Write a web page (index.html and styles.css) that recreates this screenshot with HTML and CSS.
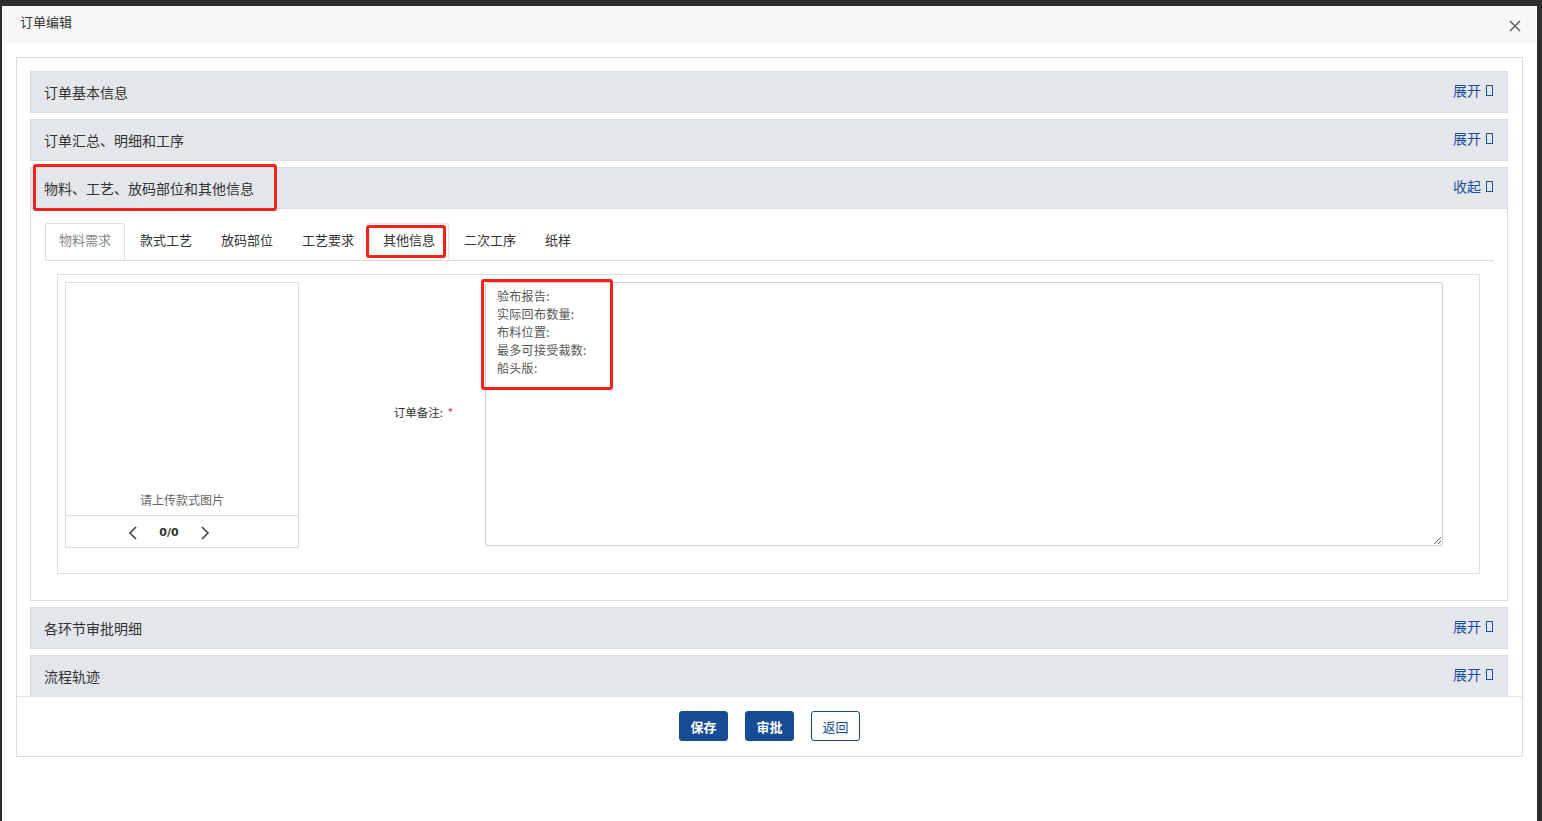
FILE: index.html
```html
<!DOCTYPE html>
<html lang="zh-CN">
<head>
    <meta charset="UTF-8">
    <meta name="viewport" content="width=device-width, initial-scale=1.0">
    <title>订单编辑</title>
    <link rel="stylesheet" href="styles.css">
</head>
<body>
    <div class="dialog">
        <div class="dialog-head">
            <span class="dialog-title">订单编辑</span>
            <span class="dialog-close">
                <svg width="12" height="12" viewBox="0 0 12 12"><path d="M1 1L11 11M11 1L1 11" stroke="#555" stroke-width="1.4" fill="none"/></svg>
            </span>
        </div>

        <div class="dialog-body">
            <div class="panel">
                <div class="panel-scroll">
                    <div class="section">
                        <div class="section-head">
                            <span class="section-title">订单基本信息</span>
                            <span class="toggle">展开 <i class="tofu"></i></span>
                        </div>
                    </div>
                    <div class="section">
                        <div class="section-head">
                            <span class="section-title">订单汇总、明细和工序</span>
                            <span class="toggle">展开 <i class="tofu"></i></span>
                        </div>
                    </div>
                    <div class="section">
                        <div class="section-head">
                            <span class="section-title">物料、工艺、放码部位和其他信息</span>
                            <span class="toggle">收起 <i class="tofu"></i></span>
                            <div class="mark mark-head"></div>
                        </div>
                        <div class="section-body">
                            <ul class="tabs">
                                <li class="tab active">物料需求</li>
                                <li class="tab">款式工艺</li>
                                <li class="tab">放码部位</li>
                                <li class="tab">工艺要求</li>
                                <li class="tab hover">其他信息<div class="mark mark-tab"></div></li>
                                <li class="tab">二次工序</li>
                                <li class="tab">纸样</li>
                            </ul>
                            <div class="tab-pane">
                                <div class="pane-box">
                                    <div class="pic-box">
                                        <div class="pic-view">请上传款式图片</div>
                                        <div class="pic-nav">
                                            <svg width="12" height="16" viewBox="0 0 12 16"><path d="M9 2L3 8L9 14" stroke="#444" stroke-width="1.6" fill="none"/></svg>
                                            <span class="pic-count">0/0</span>
                                            <svg width="12" height="16" viewBox="0 0 12 16"><path d="M3 2L9 8L3 14" stroke="#444" stroke-width="1.6" fill="none"/></svg>
                                        </div>
                                    </div>
                                    <label class="remark-label" for="remark">订单备注: <em>*</em></label>
                                    <div class="remark-wrap">
                                        <textarea id="remark" class="remark">验布报告:
实际回布数量:
布料位置:
最多可接受裁数:
船头版:</textarea>
                                        <div class="mark mark-text"></div>
                                    </div>
                                </div>
                            </div>
                        </div>
                    </div>
                    <div class="section">
                        <div class="section-head">
                            <span class="section-title">各环节审批明细</span>
                            <span class="toggle">展开 <i class="tofu"></i></span>
                        </div>
                    </div>
                    <div class="section">
                        <div class="section-head">
                            <span class="section-title">流程轨迹</span>
                            <span class="toggle">展开 <i class="tofu"></i></span>
                        </div>
                    </div>
                </div>
                <div class="panel-foot">
                    <button type="button" class="btn btn-primary">保存</button>
                    <button type="button" class="btn btn-primary">审批</button>
                    <button type="button" class="btn btn-outline">返回</button>
                </div>
            </div>
        </div>
    </div>
</body>
</html>
```

FILE: styles.css
```css
body {
    margin: 0;
    padding: 6px 5px 0 2px;
    background-color: #2d2d2d;
    font-family: "Noto Sans CJK SC", "Liberation Sans", sans-serif;
    color: #333;
    height: 821px;
    box-sizing: border-box;
    overflow: hidden;
}
.dialog {
    background: #fff;
    height: 815px;
}
.dialog-head {
    height: 37px;
    background: #f7f7f7;
    display: flex;
    align-items: center;
    justify-content: space-between;
    padding: 0 16px 0 18px;
}
.dialog-title {
    font-size: 13px;
    color: #333;
    margin-top: -6px;
}
.dialog-close {
    display: flex;
    margin-top: 3px;
}
.dialog-body {
    padding: 14px 14px 0 14px;
}
.panel {
    border: 1px solid #ddd;
    height: 698px;
    display: flex;
    flex-direction: column;
}
.panel-scroll {
    flex: 1;
    overflow: hidden;
    padding: 13px 14px 0 13px;
}
.section {
    margin-bottom: 6px;
}
.section-head {
    position: relative;
    height: 40px;
    background: #e3e6ea;
    border: 1px solid #d9dce1;
    display: flex;
    align-items: center;
    justify-content: space-between;
    padding: 0 14px 0 13px;
}
.section-title {
    font-size: 14px;
    color: #333;
    margin-top: -1px;
}
.toggle {
    font-size: 14px;
    color: #1c4f9b;
    display: flex;
    align-items: center;
    gap: 5px;
    margin-top: -4px;
}
.tofu {
    display: inline-block;
    width: 5px;
    height: 9px;
    border: 1.5px solid #1c4f9b;
}
.mark {
    position: absolute;
    border: 3px solid #f3231c;
    border-radius: 3px;
    pointer-events: none;
}
.mark-head {
    left: 2px;
    top: -4px;
    width: 238px;
    height: 41px;
}
.section-body {
    border: 1px solid #ddd;
    border-top: none;
    padding: 14px 13px 26px 14px;
}
.tabs {
    list-style: none;
    margin: 0;
    padding: 0;
    display: flex;
    border-bottom: 1px solid #ddd;
    height: 37px;
}
.tab {
    position: relative;
    padding: 0 13px;
    margin-right: 1px;
    font-size: 13px;
    line-height: 32px;
    color: #333;
    border: 1px solid transparent;
    border-bottom: none;
}
.tab.active {
    color: #888;
    background: #fff;
    border-color: #ddd;
    height: 37px;
    box-sizing: border-box;
    border-radius: 2px 2px 0 0;
}
.tab.hover {
    border-color: #e6e6e6;
}
.mark-tab {
    left: -4px;
    top: 1px;
    width: 74px;
    height: 27px;
}
.tab-pane {
    padding: 13px 14px 0 12px;
}
.pane-box {
    border: 1px solid #ddd;
    padding: 7px 36px 25px 7px;
    display: flex;
    align-items: stretch;
}
.pic-box {
    width: 232px;
    height: 264px;
    border: 1px solid #ddd;
    display: flex;
    flex-direction: column;
}
.pic-view {
    flex: 1;
    display: flex;
    align-items: flex-end;
    justify-content: center;
    font-size: 12px;
    color: #666;
    padding-bottom: 7px;
}
.pic-nav {
    height: 29px;
    border-top: 1px solid #ddd;
    display: flex;
    align-items: center;
    justify-content: center;
    gap: 20px;
    padding-right: 26px;
    padding-top: 2px;
}
.pic-count {
    font-family: "DejaVu Sans", sans-serif;
    font-size: 11px;
    font-weight: bold;
    color: #333;
}
.remark-label {
    width: 186px;
    box-sizing: border-box;
    padding-right: 32px;
    text-align: right;
    font-size: 11.5px;
    color: #333;
    align-self: center;
    margin-bottom: 6px;
}
.remark-label em {
    font-style: normal;
    color: #e33;
    margin-left: 2px;
}
.remark-wrap {
    position: relative;
    flex: 1;
    display: flex;
}
.remark {
    flex: 1;
    height: 264px;
    box-sizing: border-box;
    border: 1px solid #ccc;
    border-radius: 3px;
    padding: 4px 11px;
    font-family: "Noto Sans CJK SC", sans-serif;
    font-size: 12px;
    letter-spacing: 0.3px;
    line-height: 18px;
    color: #555;
    margin: 0;
}
.mark-text {
    left: -4px;
    top: -3px;
    width: 126px;
    height: 105px;
}
.panel-foot {
    height: 59px;
    border-top: 1px solid #e6e6e6;
    display: flex;
    align-items: center;
    justify-content: center;
    gap: 17px;
}
.btn {
    width: 49px;
    height: 30px;
    border-radius: 3px;
    font-family: "Noto Sans CJK SC", sans-serif;
    font-size: 13px;
    padding: 0;
    margin-top: -1px;
}
.btn-primary {
    background: #164c96;
    border: 1px solid #164c96;
    color: #fff;
    font-weight: bold;
}
.btn-outline {
    background: #fff;
    border: 1px solid #164c96;
    color: #164c96;
}
```
